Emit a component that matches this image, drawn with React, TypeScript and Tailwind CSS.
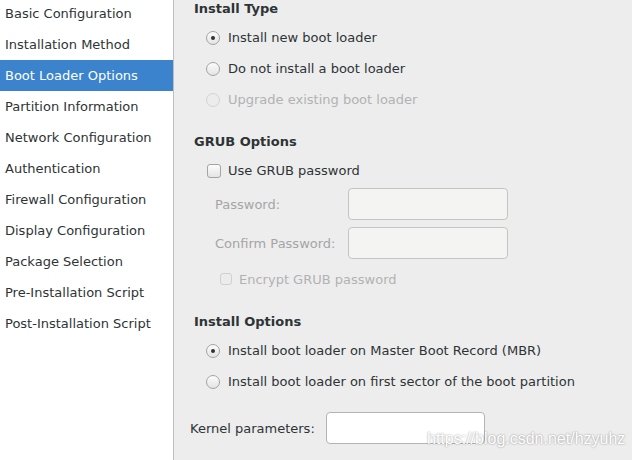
import React from 'react';

const sections = [
  'Basic Configuration',
  'Installation Method',
  'Boot Loader Options',
  'Partition Information',
  'Network Configuration',
  'Authentication',
  'Firewall Configuration',
  'Display Configuration',
  'Package Selection',
  'Pre-Installation Script',
  'Post-Installation Script',
];

function Radio({ checked = false, disabled = false }: { checked?: boolean; disabled?: boolean }) {
  return (
    <span
      className={
        'flex h-[14px] w-[14px] shrink-0 items-center justify-center rounded-full border ' +
        (disabled
          ? 'border-[#d3d3d3] bg-[#ececec]'
          : 'border-[#a4a4a4] bg-gradient-to-b from-[#fcfcfc] to-[#e4e4e4]')
      }
    >
      {checked && <span className="h-[4px] w-[4px] rounded-full bg-[#2e3436]" />}
    </span>
  );
}

function Checkbox({ disabled = false }: { disabled?: boolean }) {
  return (
    <span
      className={
        'block shrink-0 rounded-[3px] border ' +
        (disabled
          ? 'h-[12px] w-[12px] border-[#d0d0d0] bg-[#ececec]'
          : 'h-[14px] w-[14px] border-[#a4a4a4] bg-gradient-to-b from-[#fcfcfc] to-[#e4e4e4]')
      }
    />
  );
}

function RadioRow({ label, checked, disabled }: { label: string; checked?: boolean; disabled?: boolean }) {
  return (
    <div className="flex h-[31px] items-center pl-[32px]">
      <Radio checked={checked} disabled={disabled} />
      <span className={'ml-[8px] ' + (disabled ? 'text-[#b2b2b2]' : 'text-[#2e3436]')}>{label}</span>
    </div>
  );
}

export default function App() {
  return (
    <div
      className="relative flex h-[460px] w-[632px] overflow-hidden bg-[#ededed] text-[13px] leading-none"
      style={{ fontFamily: '"DejaVu Sans", sans-serif' }}
    >
      {/* sidebar */}
      <div className="h-full w-[174px] shrink-0 border-r border-[#bfbfbf] bg-white">
        <div className="-mt-[2px]">
          {sections.map((s) => (
            <div
              key={s}
              className={
                'flex h-[31px] items-center pl-[5px] ' +
                (s === 'Boot Loader Options' ? 'bg-[#3c83cd] text-white' : 'text-[#2e3436]')
              }
            >
              {s}
            </div>
          ))}
        </div>
      </div>

      {/* main pane */}
      <div className="flex flex-1 flex-col">
        <div className="flex h-[16px] items-center pl-[20px] font-bold text-[#2e3436]">Install Type</div>
        <div className="mt-[6px]">
          <RadioRow label="Install new boot loader" checked />
          <RadioRow label="Do not install a boot loader" />
          <RadioRow label="Upgrade existing boot loader" disabled />
        </div>

        <div className="mt-[18px] flex h-[16px] items-center pl-[20px] font-bold text-[#2e3436]">GRUB Options</div>
        <div className="mt-[6px] flex h-[31px] items-center pl-[33px]">
          <Checkbox />
          <span className="ml-[7px] text-[#2e3436]">Use GRUB password</span>
        </div>
        <div className="mt-[2px] flex h-[32px] items-center pl-[41px] text-[#a5a5a5]">
          <span className="w-[133px]">Password:</span>
          <div className="h-[32px] w-[160px] rounded-[4px] border border-[#c4c4c4] bg-[#f4f4f3]" />
        </div>
        <div className="mt-[7px] flex h-[32px] items-center pl-[41px] text-[#a5a5a5]">
          <span className="w-[133px]">Confirm Password:</span>
          <div className="h-[32px] w-[160px] rounded-[4px] border border-[#c4c4c4] bg-[#f4f4f3]" />
        </div>
        <div className="mt-[8px] flex h-[24px] items-center pl-[46px]">
          <Checkbox disabled />
          <span className="ml-[7px] text-[#b2b2b2]">Encrypt GRUB password</span>
        </div>

        <div className="mt-[22px] flex h-[16px] items-center pl-[20px] font-bold text-[#2e3436]">Install Options</div>
        <div className="mt-[6px]">
          <RadioRow label="Install boot loader on Master Boot Record (MBR)" checked />
          <RadioRow label="Install boot loader on first sector of the boot partition" />
        </div>

        <div className="mt-[15px] flex h-[32px] items-center pl-[16px] text-[#2e3436]">
          <span className="w-[136px]">Kernel parameters:</span>
          <div className="h-[32px] w-[159px] rounded-[4px] border border-[#b4b4b4] bg-white" />
        </div>
      </div>

      {/* watermark */}
      <div
        className="absolute left-[427px] top-[431px] text-[16px] leading-none text-white"
        style={{ fontFamily: '"Liberation Sans", Arial, sans-serif', textShadow: '0 0 2px rgba(0,0,0,0.45)' }}
      >
        https://blog.csdn.net/hzyuhz
      </div>
    </div>
  );
}
